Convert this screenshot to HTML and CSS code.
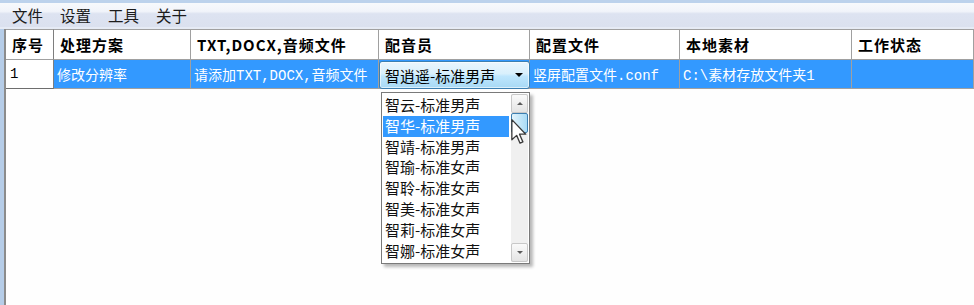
FILE: index.html
```html
<!DOCTYPE html>
<html lang="zh-CN">
<head>
    <meta charset="UTF-8">
    <link rel="stylesheet" href="styles.css">
    <title>配音任务</title>
</head>
<body>
    <div class="topline"></div>
    <div class="menubar">
        <span class="menu-item">文件</span>
        <span class="menu-item">设置</span>
        <span class="menu-item">工具</span>
        <span class="menu-item">关于</span>
    </div>

    <div class="frame">
        <div class="grid">
            <div class="head first">序号</div>
            <div class="head">处理方案</div>
            <div class="head">TXT,DOCX,音频文件</div>
            <div class="head">配音员</div>
            <div class="head">配置文件</div>
            <div class="head">本地素材</div>
            <div class="head">工作状态</div>

            <div class="cell first current">1</div>
            <div class="cell sel">修改分辨率</div>
            <div class="cell sel">请添加TXT,DOCX,音频文件</div>
            <div class="cell sel combo-cell">
                <div class="combo">
                    <span>智逍遥-标准男声</span>
                    <span class="combo-arrow"></span>
                </div>
            </div>
            <div class="cell sel">竖屏配置文件.conf</div>
            <div class="cell sel">C:\素材存放文件夹1</div>
            <div class="cell sel"></div>
        </div>
        <div class="empty"></div>

        <div class="droplist">
            <div class="options">
                <div class="option">智云-标准男声</div>
                <div class="option active">智华-标准男声</div>
                <div class="option">智靖-标准男声</div>
                <div class="option">智瑜-标准女声</div>
                <div class="option">智聆-标准女声</div>
                <div class="option">智美-标准女声</div>
                <div class="option">智莉-标准女声</div>
                <div class="option">智娜-标准女声</div>
            </div>
            <div class="scroll">
                <div class="sbtn"><span class="tri-up"></span></div>
                <div class="thumb"></div>
                <div class="track"></div>
                <div class="sbtn"><span class="tri-down"></span></div>
            </div>
        </div>

        <svg class="cursor" width="16" height="26" viewBox="0 0 12 20">
            <path d="M0.5 0.5 L0.5 16 L4.2 12.6 L6.8 18.6 L9 17.6 L6.4 11.7 L11.2 11.7 Z" fill="#fff" stroke="#3a3a3a" stroke-width="1" stroke-linejoin="round"/>
        </svg>
    </div>
</body>
</html>
```

FILE: styles.css
```css
body {
    margin: 0;
    background: #fefefe;
    font-family: "Noto Sans CJK SC", sans-serif;
    color: #000;
    width: 974px;
    height: 305px;
    overflow: hidden;
}

.topline {
    height: 3px;
    background: #bcd2ec;
}

.menubar {
    height: 24px;
    display: flex;
    align-items: center;
    padding-left: 12px;
    background: linear-gradient(#f7f9fc 0%, #f1f4fa 35%, #dde3f1 45%, #dbe1ef 100%);
    border-bottom: 2px solid #e6ebf5;
}

.menu-item {
    font-size: 15.5px;
    color: #1c1c1c;
    margin-right: 17px;
    line-height: 24px;
}

.frame {
    position: relative;
    height: 276px;
    border-left: 4px solid #b6cde8;
    box-shadow: inset 2px 0 0 #8c8c8c;
    padding-left: 2px;
}

.grid {
    display: grid;
    grid-template-columns: 48px 137px 188px 151px 150px 172px 1fr;
    grid-template-rows: 31px 29px;
}

.head,
.cell {
    box-sizing: border-box;
    border-right: 1px solid #a0a0a0;
    border-bottom: 1px solid #a0a0a0;
    display: flex;
    align-items: center;
    white-space: nowrap;
    overflow: hidden;
}

.head {
    border-top: 1px solid #a0a0a0;
    padding-left: 6px;
    font-size: 15px;
    font-weight: 700;
    letter-spacing: 1px;
    background: #fff;
}

.head.first,
.cell.first {
    border-right-color: #7e7e7e;
}

.cell {
    padding-left: 3px;
    font-family: "Liberation Mono", "Noto Sans CJK SC", monospace;
    font-size: 14px;
}

.cell.sel {
    background: #3399ff;
    color: #fff;
}

.cell.current {
    background: #fff;
    padding-left: 4px;
    border-bottom-color: #6e6e6e;
}

.combo-cell {
    padding: 0;
    overflow: visible;
    position: relative;
}

.combo {
    position: absolute;
    left: 0;
    top: 1px;
    width: 151px;
    height: 28px;
    box-sizing: border-box;
    border: 1px solid #3c7fb1;
    border-radius: 3px;
    background: linear-gradient(#eaf6fd 0%, #d9f0fc 45%, #bee6fd 55%, #a7d9f5 100%);
    box-shadow: inset 0 0 0 1px rgba(255, 255, 255, 0.6);
    color: #000;
    font-family: "Noto Sans CJK SC", sans-serif;
    font-size: 15px;
    display: flex;
    align-items: center;
    justify-content: space-between;
    padding: 0 6px 0 5px;
}

.combo-arrow {
    width: 0;
    height: 0;
    border-left: 4px solid transparent;
    border-right: 4px solid transparent;
    border-top: 4px solid #000;
}

.droplist {
    position: absolute;
    left: 377px;
    top: 63px;
    width: 149px;
    height: 172px;
    box-sizing: border-box;
    border: 1px solid #7a7a7a;
    background: #fff;
    display: flex;
    box-shadow: 3px 3px 3px rgba(0, 0, 0, 0.28);
}

.options {
    flex: 1;
    padding: 2px 1px 0 1px;
}

.option {
    height: 20.8px;
    line-height: 20.8px;
    font-size: 15px;
    padding-left: 2px;
    color: #111;
}

.option.active {
    background: #3399ff;
    color: #fff;
}

.scroll {
    width: 17px;
    margin: 1px 1px 1px 1px;
    background: #f0f0f0;
    display: flex;
    flex-direction: column;
}

.sbtn {
    height: 19px;
    box-sizing: border-box;
    border: 1px solid #c8c8c8;
    border-radius: 2px;
    background: linear-gradient(#fafafa, #e4e4e4);
    display: flex;
    align-items: center;
    justify-content: center;
}

.thumb {
    height: 20px;
    box-sizing: border-box;
    border: 1px solid #3c7fb1;
    border-radius: 2px;
    background: linear-gradient(90deg, #e3f4fc, #a9dbf6);
}

.track {
    flex: 1;
}

.tri-up,
.tri-down {
    width: 0;
    height: 0;
    border-left: 3px solid transparent;
    border-right: 3px solid transparent;
}

.tri-up {
    border-bottom: 3px solid #5a5a5a;
}

.tri-down {
    border-top: 3px solid #5a5a5a;
}

.cursor {
    position: absolute;
    left: 507px;
    top: 90px;
}
```
